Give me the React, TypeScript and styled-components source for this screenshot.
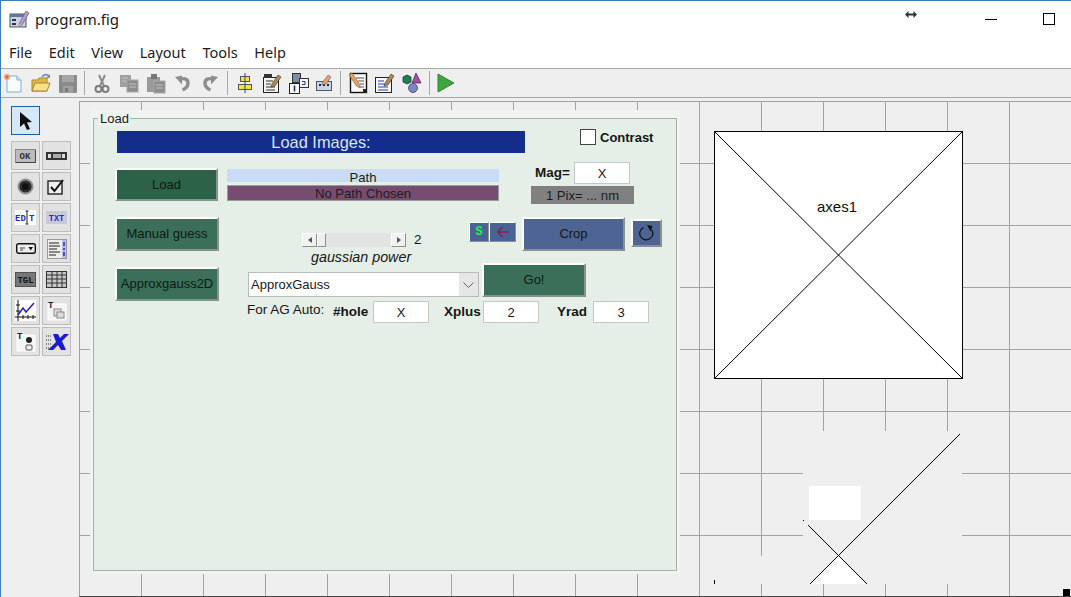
import styled, { createGlobalStyle, css } from "styled-components";

const GlobalStyle = createGlobalStyle`
    html, body {
        margin: 0;
        padding: 0;
        background: #ffffff;
    }
`;

const UI_FONT = `"Noto Sans", "Open Sans", sans-serif`;
const WIDGET_FONT = `"Liberation Sans", Arial, sans-serif`;
const GRID = "#a3a3a3";

// position on the guide canvas, this is the one place coordinates are the content
interface PlacedProps {
    $x: number;
    $y: number;
    $w: number;
    $h: number;
}

const placed = css<PlacedProps>`
    position: absolute;
    left: ${p => p.$x}px;
    top: ${p => p.$y}px;
    width: ${p => p.$w}px;
    height: ${p => p.$h}px;
    box-sizing: border-box;
`;

const Window = styled.div`
    width: 1071px;
    height: 597px;
    box-sizing: border-box;
    display: flex;
    flex-direction: column;
    overflow: hidden;
    border-top: 1px solid #3c7fb6;
    border-left: 1px solid #3c7fb6;
    background: #fff;
    font-family: ${UI_FONT};
`;

const TitleBar = styled.div`
    height: 36px;
    flex: none;
    display: flex;
    align-items: center;
    padding-left: 8px;
    gap: 5px;
    font-size: 15px;
    color: #1a1a1a;
`;

const WindowControls = styled.div`
    margin-left: auto;
    display: flex;
    align-items: center;
    height: 100%;
`;

const ResizeCursor = styled.svg`
    margin-right: 68px;
    margin-bottom: 10px;
`;

const MinimizeMark = styled.span`
    display: block;
    width: 12px;
    height: 1px;
    background: #000;
    margin-right: 46px;
`;

const MaximizeMark = styled.span`
    display: block;
    width: 12px;
    height: 12px;
    box-sizing: border-box;
    border: 1px solid #000;
    margin-right: 16px;
    margin-bottom: 1px;
`;

const MenuBar = styled.div`
    height: 31px;
    flex: none;
    display: flex;
    align-items: center;
    padding-left: 8px;
    padding-bottom: 2px;
    gap: 16.6px;
    font-size: 14.5px;
    color: #1c1c1c;
    box-sizing: border-box;
`;

const Toolbar = styled.div`
    height: 30px;
    flex: none;
    box-sizing: border-box;
    display: flex;
    align-items: center;
    background: #efefef;
    border-top: 1px solid #a8a8a8;
    border-bottom: 1px solid #a8a8a8;
    padding-left: 2px;
`;

const ToolIcon = styled.svg<{ $gap?: number; $flip?: boolean }>`
    flex: none;
    margin-right: ${p => p.$gap ?? 6}px;
    transform: ${p => (p.$flip ? "scaleX(-1)" : "none")};
`;

const ToolSep = styled.span<{ $gap?: number }>`
    flex: none;
    width: 1px;
    height: 24px;
    background: #a8a8a8;
    margin-right: ${p => p.$gap ?? 9}px;
`;

const Body = styled.div`
    flex: 1;
    display: flex;
    background: #efefef;
    padding-top: 3px;
    min-height: 0;
`;

const Palette = styled.div`
    width: 78px;
    flex: none;
    box-sizing: border-box;
    padding: 5px 0 0 10px;
`;

const SelectButton = styled.div`
    width: 29px;
    height: 29px;
    box-sizing: border-box;
    border: 1px solid #1c5f9c;
    background: #d5e8f8;
    display: flex;
    align-items: center;
    justify-content: center;
    margin-bottom: 6px;
`;

const PaletteGrid = styled.div`
    display: grid;
    grid-template-columns: 29px 29px;
    grid-auto-rows: 29px;
    gap: 2px;
`;

const PaletteCell = styled.div`
    box-sizing: border-box;
    border: 1px solid #bdbdbd;
    background: #e2e2e2;
    display: flex;
    align-items: center;
    justify-content: center;
`;

const Canvas = styled.div`
    position: relative;
    flex: 1;
    overflow: hidden;
    border-bottom: 1px solid #4a4a4a;
    background-color: #efefef;
    background-image:
        linear-gradient(to right, ${GRID} 1px, transparent 1px),
        linear-gradient(to bottom, ${GRID} 1px, transparent 1px);
    background-size: 62px 62px;
`;

const PanelArea = styled.div<PlacedProps>`
    ${placed}
    background: #f0f3f0;
`;

const PanelFrame = styled.div`
    position: absolute;
    inset: 8px 3px 3px 3px;
    box-sizing: border-box;
    border: 1px solid #a8b0a8;
    background: #e5efe7;
`;

const PanelLegend = styled.span`
    position: absolute;
    left: 4px;
    top: -7px;
    background: #eef2ee;
    padding: 0 1px 0 2px;
    font: 13px/14px ${WIDGET_FONT};
    color: #1a1a1a;
`;

const Banner = styled.div<PlacedProps>`
    ${placed}
    background: #142c8c;
    color: #d9e6f2;
    font: 16.4px/23px ${WIDGET_FONT};
    text-align: center;
`;

const bevel = css`
    border-style: solid;
    border-width: 2px;
    border-color: #fbfdfb #8a908c #8a908c #fbfdfb;
`;

const PushButton = styled.div<PlacedProps & { $bg: string }>`
    ${placed}
    ${bevel}
    background: ${p => p.$bg};
    color: #0e1a14;
    font: 13px ${WIDGET_FONT};
    display: flex;
    align-items: center;
    justify-content: center;
    white-space: nowrap;
    padding-bottom: 1px;
`;

const SmallButton = styled(PushButton)`
    border-width: 1px;
    border-color: #fbfdfb #8a908c #8a908c #fbfdfb;
`;

const GreenLetter = styled.span`
    font: 700 12px/1 "Liberation Mono", monospace;
    color: #20f050;
`;

const Strip = styled.div<PlacedProps & { $bg: string; $outlined?: boolean; $drop?: number }>`
    ${placed}
    background: ${p => p.$bg};
    border: ${p => (p.$outlined ? "1px solid #9a9a9a" : "none")};
    color: #1c1c1c;
    font: 13.1px ${WIDGET_FONT};
    display: flex;
    align-items: center;
    justify-content: center;
    white-space: nowrap;
    padding-top: ${p => p.$drop ?? 0}px;
`;

const Caption = styled.span<{ $x: number; $y: number; $bold?: boolean; $italic?: boolean; $size?: number }>`
    position: absolute;
    left: ${p => p.$x}px;
    top: ${p => p.$y}px;
    font-family: ${WIDGET_FONT};
    font-size: ${p => p.$size ?? 13.5}px;
    font-weight: ${p => (p.$bold ? 700 : 400)};
    font-style: ${p => (p.$italic ? "italic" : "normal")};
    line-height: 16px;
    color: #161616;
    white-space: nowrap;
`;

const CheckBox = styled.span<PlacedProps>`
    ${placed}
    background: #fff;
    border: 1px solid #444;
`;

const ValueBox = styled.div<PlacedProps>`
    ${placed}
    background: #fff;
    border: 1px solid #c4c8c4;
    color: #1a1a1a;
    font: 13px ${WIDGET_FONT};
    display: flex;
    align-items: center;
    justify-content: center;
`;

const Slider = styled.div<PlacedProps>`
    ${placed}
    display: flex;
    background: #e3e3e3;
`;

const SliderArrow = styled.span`
    width: 15px;
    flex: none;
    box-sizing: border-box;
    background: #f1f1f1;
    border-style: solid;
    border-width: 1px;
    border-color: #fff #8f8f8f #8f8f8f #fff;
    display: flex;
    align-items: center;
    justify-content: center;
`;

const SliderThumb = styled.span`
    width: 9px;
    flex: none;
    box-sizing: border-box;
    background: #efefef;
    border-style: solid;
    border-width: 1px;
    border-color: #fff #8f8f8f #8f8f8f #fff;
`;

const SliderTrack = styled.span`
    flex: 1;
`;

const Dropdown = styled.div<PlacedProps>`
    ${placed}
    display: flex;
    background: #fff;
    border: 1px solid #b8bcb8;
    font: 13px ${WIDGET_FONT};
    color: #1a1a1a;
`;

const DropdownValue = styled.span`
    flex: 1;
    padding-left: 2px;
    align-self: center;
`;

const DropdownArrow = styled.span`
    width: 19px;
    background: #e6e6e6;
    display: flex;
    align-items: center;
    justify-content: center;
`;

const Axes = styled.div<PlacedProps>`
    ${placed}
    background: #fff;
    border: 1px solid #000;
`;

const AxesCross = styled.svg`
    position: absolute;
    inset: 0;
    width: 100%;
    height: 100%;
`;

const AxesLabel = styled.span`
    position: absolute;
    left: 102px;
    top: 67px;
    font: 15px/16px ${WIDGET_FONT};
    color: #111;
`;

const GhostPatch = styled.div<PlacedProps>`
    ${placed}
    background: #efefef;
`;

const GhostWhite = styled.div<PlacedProps>`
    ${placed}
    background: #fff;
`;

const GhostLines = styled.svg<PlacedProps>`
    ${placed}
`;

const ResizeHandle = styled.div<PlacedProps>`
    ${placed}
    background: #000;
`;

function ProgramIcon() {
    return <svg width="21" height="20" viewBox="0 0 21 20">
        <rect x="1" y="5" width="16" height="13" fill="#c9d4e2" stroke="#44546a" />
        <rect x="1" y="5" width="16" height="3" fill="#5f7899" />
        <rect x="3" y="10" width="4" height="2" fill="#333" />
        <rect x="3" y="14" width="4" height="2" fill="#333" />
        <path d="M10 15 L17 2 L20 4 L13 16 L10 17 Z" fill="#b89ad0" stroke="#6b5a80" strokeWidth=".7" />
        <path d="M10 15 L13 16 L10 17 Z" fill="#e6c070" />
    </svg>;
}

function NewIcon() {
    return <ToolIcon width="20" height="22" viewBox="0 0 20 22" $gap={8}>
        <path d="M4 4H14L18 8V20H4Z" fill="#f6fbff" stroke="#7ab0d8" />
        <path d="M14 4V8H18" fill="#d4e8f6" stroke="#7ab0d8" />
        <circle cx="4" cy="5" r="3" fill="#f0a070" />
        <circle cx="4" cy="5" r="1.2" fill="#e05a30" />
    </ToolIcon>;
}

function OpenIcon() {
    return <ToolIcon width="20" height="22" viewBox="0 0 20 22" $gap={7}>
        <path d="M1 8H7L8 6H16V19H1Z" fill="#e0b848" stroke="#a8862c" />
        <path d="M1 19L4 11H19L16 19Z" fill="#f7e08c" stroke="#a8862c" />
        <path d="M11 5C13 2 16 2 18 4" fill="none" stroke="#6d93b0" strokeWidth="1.6" />
        <path d="M19 2V6H15Z" fill="#6d93b0" />
    </ToolIcon>;
}

function SaveIcon() {
    return <ToolIcon width="20" height="22" viewBox="0 0 20 22" $gap={6}>
        <rect x="1" y="3" width="18" height="18" rx="1" fill="#8a8a8a" />
        <rect x="4" y="3" width="12" height="7" fill="#a6a6a6" />
        <rect x="5" y="14" width="10" height="7" fill="#a0a0a0" />
        <rect x="7" y="16" width="3" height="4" fill="#7a7a7a" />
    </ToolIcon>;
}

function CutIcon() {
    return <ToolIcon width="16" height="22" viewBox="0 0 16 22" $gap={9}>
        <path d="M5 3L10 14M11 3L6 14" stroke="#8c8c8c" strokeWidth="2" fill="none" />
        <circle cx="4.5" cy="17" r="3" fill="none" stroke="#7c7c7c" strokeWidth="2" />
        <circle cx="11.5" cy="17" r="3" fill="none" stroke="#7c7c7c" strokeWidth="2" />
    </ToolIcon>;
}

function CopyIcon() {
    return <ToolIcon width="20" height="22" viewBox="0 0 20 22" $gap={7}>
        <rect x="1" y="3" width="11" height="12" fill="#a0a0a0" />
        <rect x="8" y="8" width="11" height="12" fill="#8c8c8c" stroke="#a8a8a8" />
        <path d="M3 6H9M3 9H7M10 12H17M10 15H17" stroke="#c4c4c4" />
    </ToolIcon>;
}

function PasteIcon() {
    return <ToolIcon width="20" height="22" viewBox="0 0 20 22" $gap={8}>
        <rect x="1" y="5" width="13" height="15" fill="#9a9a9a" />
        <rect x="5" y="2" width="6" height="5" fill="#767676" />
        <rect x="8" y="9" width="11" height="12" fill="#8c8c8c" stroke="#a8a8a8" />
        <path d="M10 13H17M10 16H17" stroke="#c4c4c4" />
    </ToolIcon>;
}

function UndoIcon({ flip }: { flip?: boolean }) {
    return <ToolIcon width="17" height="22" viewBox="0 0 17 22" $gap={flip ? 8 : 11} $flip={flip}>
        <path d="M5 8C9 5.500 14 6.500 14 11C14 14 12 16.500 8.500 18" fill="none" stroke="#8e8e8e" strokeWidth="3.400" />
        <path d="M1 5L8 3.500V12.500Z" fill="#8e8e8e" />
    </ToolIcon>;
}

function AlignIcon() {
    return <ToolIcon width="16" height="22" viewBox="0 0 16 22" $gap={9}>
        <rect x="3.500" y="4.500" width="9" height="5" fill="#f3e13e" stroke="#555" />
        <rect x="1.500" y="12.500" width="13" height="5" fill="#f3e13e" stroke="#555" />
        <path d="M8 1V21" stroke="#3040b0" />
    </ToolIcon>;
}

function MenuEditorIcon() {
    return <ToolIcon width="20" height="22" viewBox="0 0 20 22" $gap={7}>
        <rect x="1.500" y="5.500" width="15" height="15" fill="#f4f4f4" stroke="#222" />
        <rect x="2" y="2" width="8" height="4" fill="#333" />
        <path d="M4 9H11M4 12H9M4 15H13M4 18H13" stroke="#333" />
        <path d="M10 12L16 3L19 5L13 14L9 15Z" fill="#b08a50" stroke="#333" strokeWidth=".6" />
    </ToolIcon>;
}

function TabOrderIcon() {
    return <ToolIcon width="20" height="22" viewBox="0 0 20 22" $gap={7}>
        <rect x="3.500" y="1.500" width="8" height="9" fill="#7a8ea8" stroke="#333" />
        <rect x="10.500" y="6.500" width="9" height="9" fill="#f4f4f4" stroke="#333" />
        <rect x=".5" y="11.500" width="10" height="10" fill="#f8f8f8" stroke="#222" />
        <path d="M5.500 13.500V19.500" stroke="#2030a0" strokeWidth="1.600" />
        <path d="M13 9.500H16V12.500H13" stroke="#2030a0" fill="none" />
    </ToolIcon>;
}

function ToolbarEditorIcon() {
    return <ToolIcon width="17" height="22" viewBox="0 0 17 22" $gap={7}>
        <rect x=".5" y="9.500" width="15" height="9" fill="#c8d6e4" stroke="#556" />
        <path d="M3 13H5M7 13H9M11 13H13" stroke="#223" strokeWidth="2" />
        <path d="M7 10L12 3L15 5L10 12L6 13Z" fill="#e8a070" stroke="#555" strokeWidth=".6" />
    </ToolIcon>;
}

function EditorIcon() {
    return <ToolIcon width="20" height="22" viewBox="0 0 20 22" $gap={7}>
        <rect x="2.500" y="1.500" width="16" height="19" fill="#fafafa" stroke="#111" strokeWidth="1.400" />
        <path d="M8 6H16M10 9H16M12 12H16M12 15H16" stroke="#555" />
        <path d="M1 3L4 1L12 13L12 16L8.500 14Z" fill="#e89c60" stroke="#664" strokeWidth=".6" />
        <rect x="15" y="17" width="4" height="4" fill="#222" />
    </ToolIcon>;
}

function InspectorIcon() {
    return <ToolIcon width="20" height="22" viewBox="0 0 20 22" $gap={7}>
        <rect x=".5" y="5.500" width="16" height="15" fill="#f8f8f8" stroke="#222" />
        <path d="M3 9H9M3 12H11M3 15H13M3 18H13" stroke="#3038b8" />
        <path d="M10 11L16 2L19 4L13 13L9 14Z" fill="#b08a50" stroke="#333" strokeWidth=".6" />
    </ToolIcon>;
}

function BrowserIcon() {
    return <ToolIcon width="20" height="22" viewBox="0 0 20 22" $gap={7}>
        <path d="M1 5L5 3L9 5V10L5 12L1 10Z" fill="#1d8050" stroke="#123" strokeWidth=".7" />
        <path d="M14 1L19 11H10Z" fill="#a050a8" stroke="#423" strokeWidth=".7" />
        <circle cx="11" cy="16" r="4.500" fill="#7c86c8" stroke="#334" strokeWidth=".7" />
    </ToolIcon>;
}

function RunIcon() {
    return <ToolIcon width="18" height="22" viewBox="0 0 18 22">
        <path d="M1 2L17 11L1 20Z" fill="#3da63c" stroke="#2c8a34" />
    </ToolIcon>;
}

function ArrowGlyph() {
    return <svg width="17" height="20" viewBox="0 0 17 20">
        <path d="M3 1V16L7 12.500L10 19L13 18L10 11.500L15 11Z" fill="#111" />
    </svg>;
}

function WidgetGlyph({ name }: { name: string }) {
    switch (name) {
        case "push":
            return <svg width="21" height="14" viewBox="0 0 21 14">
                <rect x=".5" y=".5" width="20" height="13" fill="#bbb" stroke="#888" />
                <path d="M20.500 1V13.500H1" stroke="#444" fill="none" />
                <text x="10" y="10" textAnchor="middle" fontSize="9" fontWeight="700" fontFamily="Liberation Mono, monospace" fill="#333">OK</text>
            </svg>;
        case "slider":
            return <svg width="21" height="8" viewBox="0 0 21 8">
                <rect width="21" height="8" fill="#333" />
                <rect x="2" y="2" width="3" height="4" fill="#ddd" />
                <rect x="7" y="2" width="8" height="4" fill="#aaa" />
                <rect x="16" y="2" width="3" height="4" fill="#ddd" />
            </svg>;
        case "radio":
            return <svg width="17" height="17" viewBox="0 0 17 17">
                <circle cx="8.500" cy="8.500" r="7.500" fill="#999" stroke="#888" />
                <circle cx="8.500" cy="8.500" r="5.500" fill="#333" stroke="#222" strokeWidth="1.200" />
                <circle cx="8.500" cy="8.500" r="3.500" fill="#111" />
            </svg>;
        case "check":
            return <svg width="19" height="17" viewBox="0 0 19 17">
                <rect x="1" y="3" width="14" height="13" fill="#eee" stroke="#222" strokeWidth="1.400" />
                <path d="M4 9L7.500 13L16 2" stroke="#111" strokeWidth="2" fill="none" />
            </svg>;
        case "edit":
            return <svg width="21" height="15" viewBox="0 0 21 15">
                <rect width="21" height="15" fill="#fff" />
                <text x="0" y="11" fontSize="9" fontWeight="700" fontFamily="Liberation Mono, monospace" fill="#2a2ac8">ED</text>
                <path d="M12 1V14M10.500 1H13.500M10.500 14H13.500" stroke="#222" />
                <text x="14" y="11" fontSize="9" fontWeight="700" fontFamily="Liberation Mono, monospace" fill="#2a2ac8">T</text>
            </svg>;
        case "text":
            return <svg width="21" height="13" viewBox="0 0 21 13">
                <rect width="21" height="13" fill="#c9c9d9" />
                <text x="10.500" y="10" textAnchor="middle" fontSize="8.500" fontWeight="700" fontFamily="Liberation Mono, monospace" fill="#2a2ac8">TXT</text>
            </svg>;
        case "popup":
            return <svg width="20" height="11" viewBox="0 0 20 11">
                <rect x=".7" y=".7" width="18.600" height="9.600" rx="2" fill="#eee" stroke="#111" strokeWidth="1.400" />
                <path d="M4 5H9M4 7H7" stroke="#444" />
                <path d="M12.500 4H17L14.700 7.500Z" fill="#111" />
            </svg>;
        case "list":
            return <svg width="20" height="20" viewBox="0 0 20 20">
                <rect x=".5" y=".5" width="19" height="19" fill="#eee" stroke="#999" />
                <path d="M2 4H12M2 7H13M2 10H10M2 13H13M2 16H9" stroke="#222" strokeWidth="1.200" />
                <rect x="15" y="1" width="4" height="18" fill="#b8bee8" />
                <path d="M17 3V7M17 9V11M17 13V17" stroke="#2222aa" strokeWidth="1.400" />
            </svg>;
        case "toggle":
            return <svg width="21" height="15" viewBox="0 0 21 15">
                <rect width="21" height="15" fill="#777" stroke="#333" />
                <text x="10.500" y="11" textAnchor="middle" fontSize="9" fontWeight="700" fontFamily="Liberation Mono, monospace" fill="#111">TGL</text>
            </svg>;
        case "table":
            return <svg width="21" height="17" viewBox="0 0 21 17">
                <rect x=".5" y=".5" width="20" height="16" fill="#c8c8c8" stroke="#333" />
                <path d="M1 4H20M1 8H20M1 12H20M6 1V16M11 1V16M16 1V16" stroke="#333" />
            </svg>;
        case "axes":
            return <svg width="21" height="21" viewBox="0 0 21 21">
                <rect width="21" height="21" fill="#fff" />
                <path d="M3 0V21M0 17H21M8 15V19M13 15V19M18 15V19M1 5H5M1 11H5" stroke="#111" />
                <path d="M3 15L8 8L11 12L19 3" stroke="#2222cc" strokeWidth="1.500" fill="none" />
            </svg>;
        case "panel":
            return <svg width="20" height="21" viewBox="0 0 20 21">
                <rect x="1" y="4" width="18" height="16" fill="#f4f4f4" stroke="#fff" />
                <rect x="7" y="9" width="7" height="7" fill="#ddd" stroke="#888" />
                <rect x="10" y="12" width="7" height="6" fill="#ddd" stroke="#888" />
                <text x="1" y="8" fontSize="9" fontWeight="700" fontFamily="Liberation Mono, monospace" fill="#222">T</text>
            </svg>;
        case "group":
            return <svg width="20" height="21" viewBox="0 0 20 21">
                <rect x="1" y="4" width="18" height="16" fill="#f6f6f6" stroke="#fff" />
                <circle cx="13" cy="9" r="3" fill="#222" />
                <rect x="10" y="14" width="6" height="5" rx="1" fill="#eee" stroke="#555" />
                <text x="1" y="8" fontSize="9" fontWeight="700" fontFamily="Liberation Mono, monospace" fill="#222">T</text>
            </svg>;
        default:
            return <svg width="24" height="18" viewBox="0 0 24 18">
                <path d="M1 3H7M1 7H6M1 11H6M1 15H7" stroke="#333" strokeDasharray="1 1" />
                <path d="M8 1H13L15 5L19 1H24L17 8L21 17H16L13 12L8 17H3L11 9Z" fill="#1a1ad0" />
            </svg>;
    }
}

const WIDGETS = ["push", "slider", "radio", "check", "edit", "text", "popup", "list", "toggle", "table", "axes", "panel", "group", "activex"];

export default function App() {
    return <Window>
        <GlobalStyle />
        <TitleBar>
            <ProgramIcon />
            program.fig
            <WindowControls>
                <ResizeCursor width="12" height="7" viewBox="0 0 12 7">
                    <path d="M0 3.500L3.500 0V2.500H8.500V0L12 3.500L8.500 7V4.500H3.500V7Z" fill="#333" />
                </ResizeCursor>
                <MinimizeMark />
                <MaximizeMark />
            </WindowControls>
        </TitleBar>

        <MenuBar>
            <span>File</span>
            <span>Edit</span>
            <span>View</span>
            <span>Layout</span>
            <span>Tools</span>
            <span>Help</span>
        </MenuBar>

        <Toolbar>
            <NewIcon />
            <OpenIcon />
            <SaveIcon />
            <ToolSep />
            <CutIcon />
            <CopyIcon />
            <PasteIcon />
            <UndoIcon />
            <UndoIcon flip />
            <ToolSep />
            <AlignIcon />
            <MenuEditorIcon />
            <TabOrderIcon />
            <ToolbarEditorIcon />
            <ToolSep $gap={7} />
            <EditorIcon />
            <InspectorIcon />
            <BrowserIcon />
            <ToolSep $gap={7} />
            <RunIcon />
        </Toolbar>

        <Body>
            <Palette>
                <SelectButton><ArrowGlyph /></SelectButton>
                <PaletteGrid>
                    {WIDGETS.map(name => <PaletteCell key={name}>
                        <WidgetGlyph name={name} />
                    </PaletteCell>)}
                </PaletteGrid>
            </Palette>

            <Canvas>
                <PanelArea $x={11} $y={9} $w={590} $h={464}>
                    <PanelFrame>
                        <PanelLegend>Load</PanelLegend>
                        <Banner $x={23} $y={12} $w={408} $h={22}>Load Images:</Banner>

                        <CheckBox $x={486} $y={10} $w={16} $h={16} />
                        <Caption $x={506} $y={11} $bold $size={13}>Contrast</Caption>

                        <PushButton $x={21} $y={49} $w={103} $h={33} $bg="#2c6348">Load</PushButton>
                        <PushButton $x={21} $y={98} $w={104} $h={34} $bg="#3b6f59">Manual guess</PushButton>
                        <PushButton $x={21} $y={148} $w={104} $h={34} $bg="#3b6f59">Approxgauss2D</PushButton>

                        <Strip $x={133} $y={50} $w={272} $h={13} $bg="#cadcf5" $drop={3}>Path</Strip>
                        <Strip $x={133} $y={66} $w={272} $h={16} $bg="#764d71" $outlined $drop={1}>No Path Chosen</Strip>

                        <Caption $x={441} $y={46} $bold>Mag=</Caption>
                        <ValueBox $x={480} $y={43} $w={56} $h={22}>X</ValueBox>
                        <Strip $x={437} $y={67} $w={103} $h={18} $bg="#808080">1 Pix= ... nm</Strip>

                        <SmallButton $x={375} $y={103} $w={20} $h={20} $bg="#4a6294">
                            <GreenLetter>S</GreenLetter>
                        </SmallButton>
                        <SmallButton $x={395} $y={103} $w={27} $h={20} $bg="#4a6294">
                            <svg width="13" height="12" viewBox="0 0 13 12">
                                <path d="M12.500 6H1.500M6.500 1L1.500 6L6.500 11" stroke="#8c1f50" strokeWidth="1.300" fill="none" />
                            </svg>
                        </SmallButton>
                        <PushButton $x={428} $y={98} $w={103} $h={34} $bg="#4e6593">Crop</PushButton>
                        <PushButton $x={537} $y={100} $w={31} $h={28} $bg="#4e6593">
                            <svg width="17" height="17" viewBox="0 0 17 17">
                                <path d="M5.500 3.500A6.500 6.500 0 1 0 13.500 5.500" stroke="#111" strokeWidth="1.200" fill="none" />
                                <path d="M9 1L14.500 2L12.500 7.500Z" fill="#111" />
                            </svg>
                        </PushButton>

                        <Slider $x={208} $y={114} $w={104} $h={14}>
                            <SliderArrow>
                                <svg width="4" height="6" viewBox="0 0 4 6"><path d="M4 0V6L0 3Z" fill="#555" /></svg>
                            </SliderArrow>
                            <SliderThumb />
                            <SliderTrack />
                            <SliderArrow>
                                <svg width="4" height="6" viewBox="0 0 4 6"><path d="M0 0V6L4 3Z" fill="#555" /></svg>
                            </SliderArrow>
                        </Slider>
                        <Caption $x={320} $y={113}>2</Caption>
                        <Caption $x={217} $y={130} $italic $size={14.3}>gaussian power</Caption>

                        <Dropdown $x={154} $y={153} $w={231} $h={25}>
                            <DropdownValue>ApproxGauss</DropdownValue>
                            <DropdownArrow>
                                <svg width="11" height="6" viewBox="0 0 11 6">
                                    <path d="M.5 .5L5.500 5.500L10.500 .5" stroke="#666" fill="none" />
                                </svg>
                            </DropdownArrow>
                        </Dropdown>
                        <PushButton $x={388} $y={144} $w={104} $h={34} $bg="#3b6f59">Go!</PushButton>

                        <Caption $x={153} $y={183}>For AG Auto:</Caption>
                        <Caption $x={239} $y={185} $bold>#hole</Caption>
                        <ValueBox $x={279} $y={182} $w={56} $h={22}>X</ValueBox>
                        <Caption $x={350} $y={185} $bold>Xplus</Caption>
                        <ValueBox $x={389} $y={182} $w={56} $h={22}>2</ValueBox>
                        <Caption $x={463} $y={185} $bold>Yrad</Caption>
                        <ValueBox $x={499} $y={182} $w={56} $h={22}>3</ValueBox>
                    </PanelFrame>
                </PanelArea>

                <Axes $x={635} $y={30} $w={249} $h={248}>
                    <AxesCross viewBox="0 0 247 246" preserveAspectRatio="none">
                        <path d="M0 0L247 246M247 0L0 246" stroke="#000" />
                    </AxesCross>
                    <AxesLabel>axes1</AxesLabel>
                </Axes>

                <GhostPatch $x={724} $y={330} $w={159} $h={153} />
                <GhostPatch $x={635} $y={455} $w={89} $h={28} />
                <GhostWhite $x={730} $y={385} $w={52} $h={34} />
                <GhostLines $x={630} $y={330} $w={260} $h={160} viewBox="0 0 260 160">
                    <path d="M101 153L129.500 124.500L158 153Z" fill="#ffffff" />
                    <path d="M99 94L158 153" fill="none" stroke="#000" />
                    <path d="M251 3L101 153" fill="none" stroke="#000" />
                    <path d="M94.500 89V90" stroke="#000" />
                    <path d="M5.500 149V153" stroke="#000" />
                </GhostLines>
                <ResizeHandle $x={984} $y={488} $w={7} $h={7} />
            </Canvas>
        </Body>
    </Window>;
}
